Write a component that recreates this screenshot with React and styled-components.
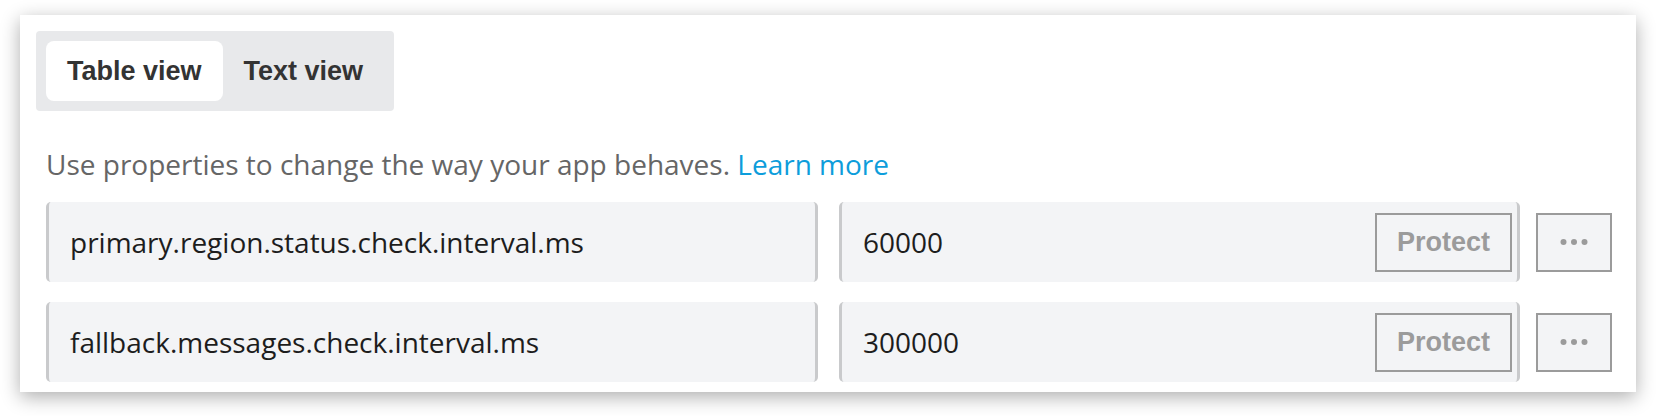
import React, { useState } from "react";
import styled, { createGlobalStyle } from "styled-components";

const GlobalStyle = createGlobalStyle`
  html, body {
    margin: 0;
    padding: 0;
    background: #ffffff;
  }
  body {
    font-family: "Open Sans", "Liberation Sans", sans-serif;
  }
  * { box-sizing: border-box; }
`;

const Page = styled.div`
  padding: 15px 20px 24px;
`;

const Card = styled.section`
  background: #ffffff;
  box-shadow: 0 5px 18px rgba(0, 0, 0, 0.32);
  padding: 16px 24px 10px 16px;
`;

const Segmented = styled.div`
  display: inline-flex;
  padding: 10px;
  background: #e8e9eb;
  border-radius: 4px;
`;

const Tab = styled.button`
  height: 60px;
  padding: 0 21px;
  border: 0;
  border-radius: 8px;
  background: ${(p) => (p.$active ? "#ffffff" : "transparent")};
  color: #333333;
  font-family: "Liberation Sans", Arial, sans-serif;
  font-weight: 700;
  font-size: 27px;
  cursor: pointer;
`;

const Body = styled.div`
  padding-left: 10px;
`;

const Intro = styled.p`
  margin: 34px 0 19px;
  font-size: 28px;
  line-height: 38px;
  color: #666666;
`;

const Link = styled.a`
  color: #0d9ddb;
  text-decoration: none;
`;

const Rows = styled.div`
  display: flex;
  flex-direction: column;
  gap: 20px;
`;

const Row = styled.div`
  display: grid;
  grid-template-columns: 772px 681px 76px;
  column-gap: 21px;
  align-items: center;
  & > :last-child {
    margin-left: -5px;
  }
`;

const Field = styled.div`
  height: 80px;
  display: flex;
  align-items: center;
  padding: 0 5px 0 21px;
  background: #f3f4f6;
  border-left: 3px solid #c9cacc;
  border-right: 3px solid #c9cacc;
  border-top: 0;
  border-bottom: 0;
  border-radius: 5px;
  font-size: 28px;
  color: #1d1d1d;
`;

const FieldText = styled.span`
  flex: 1;
  white-space: nowrap;
`;

const OutlineButton = styled.button`
  height: 59px;
  width: ${(p) => p.$width}px;
  display: flex;
  align-items: center;
  justify-content: center;
  border: 2px solid #9b9b9b;
  border-radius: 0;
  background: #f3f4f6;
  color: #9b9b9b;
  font-family: "Liberation Sans", Arial, sans-serif;
  font-weight: 700;
  font-size: 27px;
  padding: 0;
  cursor: pointer;
`;

const Dots = () => (
  <svg width="28" height="8" viewBox="0 0 28 8" aria-hidden="true">
    <circle cx="3.5" cy="4" r="3" fill="#9b9b9b" />
    <circle cx="14" cy="4" r="3" fill="#9b9b9b" />
    <circle cx="24.5" cy="4" r="3" fill="#9b9b9b" />
  </svg>
);

const properties = [
  { key: "primary.region.status.check.interval.ms", value: "60000" },
  { key: "fallback.messages.check.interval.ms", value: "300000" },
];

export default function App() {
  const [view, setView] = useState("table");
  return (
    <Page>
      <GlobalStyle />
      <Card>
        <Segmented>
          <Tab $active={view === "table"} onClick={() => setView("table")}>
            Table view
          </Tab>
          <Tab $active={view === "text"} onClick={() => setView("text")}>
            Text view
          </Tab>
        </Segmented>
        <Body>
          <Intro>
            Use properties to change the way your app behaves.{" "}
            <Link href="#">Learn more</Link>
          </Intro>
          <Rows>
            {properties.map((p) => (
              <Row key={p.key}>
                <Field>
                  <FieldText>{p.key}</FieldText>
                </Field>
                <Field>
                  <FieldText>{p.value}</FieldText>
                  <OutlineButton $width={137}>Protect</OutlineButton>
                </Field>
                <OutlineButton $width={76} aria-label="More">
                  <Dots />
                </OutlineButton>
              </Row>
            ))}
          </Rows>
        </Body>
      </Card>
    </Page>
  );
}
